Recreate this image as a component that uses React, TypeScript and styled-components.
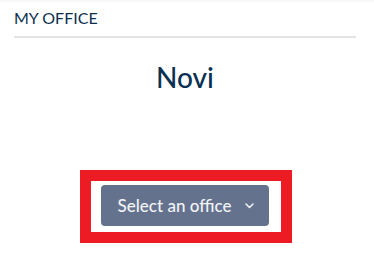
import React from 'react';
import styled, { createGlobalStyle } from 'styled-components';

const GlobalStyle = createGlobalStyle`
  body {
    margin: 0;
    background: #ffffff;
    font-family: 'Lato', 'Liberation Sans', sans-serif;
  }
`;

const App: React.FC = () => {
  return (
    <>
      <GlobalStyle />
      <Page>
        <TopStrip />
        <Section>
          <SectionTitle>MY OFFICE</SectionTitle>
          <Divider />
          <OfficeName>Novi</OfficeName>
          <Highlight>
            <SelectButton type="button">
              Select an office
              <svg width="9" height="6" viewBox="0 0 9 6" fill="none">
                <path d="M1 1l3.5 3.5L8 1" stroke="#f2f3f6" strokeWidth="1.5" strokeLinecap="round" strokeLinejoin="round" />
              </svg>
            </SelectButton>
          </Highlight>
        </Section>
      </Page>
    </>
  );
};

const Page = styled.div`
  width: 374px;
  height: 266px;
  background: #ffffff;
`;

const TopStrip = styled.div`
  height: 2px;
  background: #f7f7f7;
`;

const Section = styled.div`
  width: 342px;
  margin-left: 14px;
  display: flex;
  flex-direction: column;
  align-items: center;
`;

const SectionTitle = styled.h2`
  align-self: flex-start;
  margin: 6px 0 0;
  font-size: 16px;
  font-weight: 400;
  line-height: 20px;
  color: #0d2f4f;
`;

const Divider = styled.div`
  align-self: stretch;
  height: 2px;
  margin-top: 8px;
  background: #e4e4e4;
`;

const OfficeName = styled.h1`
  margin: 22px 0 0;
  font-size: 28px;
  font-weight: 500;
  line-height: 34px;
  color: #0b3152;
`;

const Highlight = styled.div`
  margin-top: 76px;
  margin-left: 2px;
  display: flex;
  border: 11px solid #ed1c24;
  padding: 4px 12px 6px 10px;
  background: #ffffff;
`;

const SelectButton = styled.button`
  width: 168px;
  height: 41px;
  display: flex;
  align-items: center;
  justify-content: center;
  gap: 14px;
  padding: 0 0 0 2px;
  border: none;
  border-radius: 4px;
  background: #65728e;
  color: #f2f3f6;
  font-family: 'Lato', 'Liberation Sans', sans-serif;
  font-size: 17px;
  font-weight: 500;
  cursor: pointer;
`;

export default App;
